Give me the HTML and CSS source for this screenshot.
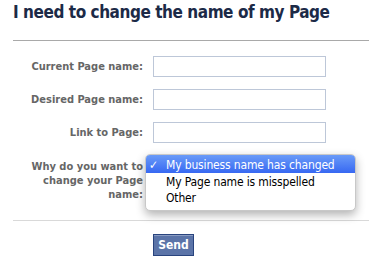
FILE: index.html
```html
<!DOCTYPE html>
<html>
<head>
<meta charset="utf-8">
<link rel="stylesheet" href="styles.css">
</head>
<body>
<div class="page">
  <h1 class="title">I need to change the name of my Page</h1>
  <div class="rule"></div>
  <form class="form">
    <label class="label">Current Page name:</label>
    <input class="field" type="text">
    <label class="label">Desired Page name:</label>
    <input class="field" type="text">
    <label class="label">Link to Page:</label>
    <input class="field" type="text">
    <label class="label label-multi">Why do you want to change your Page name:</label>
    <div class="select-wrap">
      <ul class="menu">
        <li class="option selected"><span class="check">✓</span>My business name has changed</li>
        <li class="option">My Page name is misspelled</li>
        <li class="option">Other</li>
      </ul>
    </div>
  </form>
  <div class="rule rule-light"></div>
  <div class="actions">
    <button class="send" type="button">Send</button>
  </div>
</div>
</body>
</html>
```
FILE: styles.css
```css
html, body {
  margin: 0;
  padding: 0;
  background: #fff;
}
.page {
  padding: 0 0 0 13px;
  font-family: "DejaVu Sans Condensed", "DejaVu Sans", sans-serif;
}
.title {
  margin: 0;
  font-size: 17px;
  letter-spacing: -0.45px;
  line-height: 24px;
  font-weight: bold;
  color: #1c2a47;
  white-space: nowrap;
}
.rule {
  height: 1px;
  background: #a9a9a9;
  margin-top: 16px;
}
.rule-light {
  background: #d9d9d9;
  margin-top: 18px;
}
.form {
  display: grid;
  grid-template-columns: 130px 173px;
  column-gap: 10px;
  row-gap: 12px;
  margin: 15px 0 0 0;
}
.label {
  font-size: 11px;
  font-weight: bold;
  color: #666;
  text-align: right;
  line-height: 21px;
}
.label-multi {
  line-height: 14px;
  padding-top: 5px;
}
.field {
  box-sizing: border-box;
  height: 21px;
  width: 173px;
  margin: 0;
  border: 1px solid #bdc7d8;
  background: #fff;
}
.select-wrap {
  position: relative;
  height: 22px;
}
.menu {
  position: absolute;
  top: -1px;
  left: -8px;
  width: 211px;
  box-sizing: border-box;
  margin: 0;
  padding: 0 0 4px 0;
  list-style: none;
  background: #fff;
  border: 1px solid #c8c8c8;
  border-radius: 5px;
  box-shadow: 0 4px 10px rgba(0, 0, 0, 0.3);
  overflow: hidden;
  z-index: 2;
}
.option {
  position: relative;
  padding-left: 20px;
  font-size: 12px;
  letter-spacing: -0.15px;
  line-height: 16px;
  color: #000;
  white-space: nowrap;
}
.option.selected {
  padding-top: 2px;
  margin-bottom: 1px;
  background: linear-gradient(#6a9bf8, #3768f2);
  color: #fff;
}
.check {
  position: absolute;
  left: 3px;
  top: 2px;
  font-weight: bold;
}
.actions {
  padding: 13px 0 0 140px;
}
.send {
  box-sizing: border-box;
  width: 41px;
  height: 22px;
  margin: 0;
  padding: 0;
  background: #5b74a8;
  border: 1px solid #29447e;
  box-shadow: inset 0 1px 0 #8a9cc2;
  color: #fff;
  font-family: "DejaVu Sans Condensed", "DejaVu Sans", sans-serif;
  font-size: 12px;
  font-weight: bold;
}
```
